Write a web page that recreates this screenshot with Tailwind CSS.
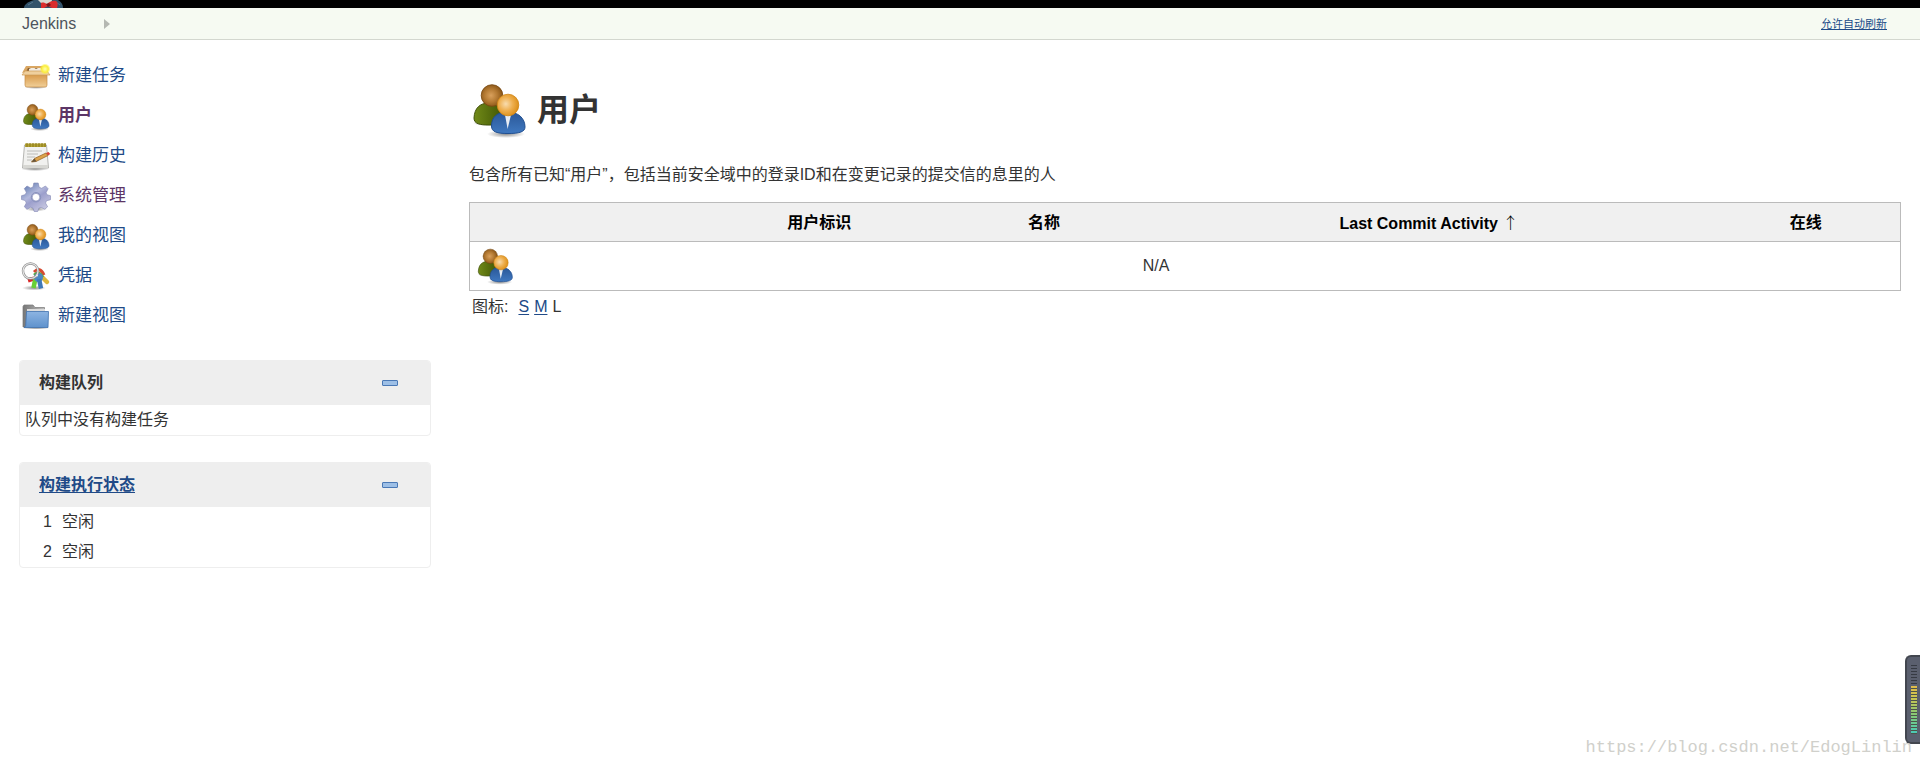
<!DOCTYPE html>
<html lang="zh-CN">
<head>
<meta charset="utf-8">
<meta name="viewport" content="width=device-width, initial-scale=1">
<title>用户 [Jenkins]</title>
<script src="https://cdn.jsdelivr.net/npm/@tailwindcss/browser@4"></script>
</head>
<body class="relative flex min-h-screen flex-col overflow-x-hidden bg-white font-['Liberation_Sans','Noto_Sans_CJK_SC',sans-serif] text-base leading-5 text-[#333]">

<!-- shared icon shapes -->
<svg class="absolute size-0" aria-hidden="true">
  <defs>
    <radialGradient id="gBrown" cx=".45" cy=".5" r=".6"><stop offset="0" stop-color="#d9a05c"/><stop offset=".5" stop-color="#b47a33"/><stop offset="1" stop-color="#7f4c10"/></radialGradient>
    <radialGradient id="gOrange" cx=".4" cy=".45" r=".65"><stop offset="0" stop-color="#f8dcae"/><stop offset=".5" stop-color="#eeae4d"/><stop offset="1" stop-color="#d98a10"/></radialGradient>
    <linearGradient id="gGreen" x2="1"><stop offset="0" stop-color="#718a18"/><stop offset="1" stop-color="#3f5404"/></linearGradient>
    <linearGradient id="gBlue" x2="0" y2="1"><stop offset="0" stop-color="#2a5797"/><stop offset="1" stop-color="#3f78c0"/></linearGradient>
    <radialGradient id="gShade"><stop offset="0" stop-color="#000" stop-opacity=".45"/><stop offset="1" stop-color="#000" stop-opacity="0"/></radialGradient>
    <linearGradient id="gBox" x2="0" y2="1"><stop offset="0" stop-color="#c98d3c"/><stop offset=".3" stop-color="#dca256"/><stop offset="1" stop-color="#f1cf98"/></linearGradient>
    <radialGradient id="gStar"><stop offset="0" stop-color="#fffdb0"/><stop offset=".6" stop-color="#fbee3a"/><stop offset="1" stop-color="#fbee3a" stop-opacity="0"/></radialGradient>
    <linearGradient id="gGear" x2=".7" y2="1"><stop offset="0" stop-color="#4f70a8"/><stop offset=".45" stop-color="#b3b9dc"/><stop offset=".6" stop-color="#9c9fcc"/><stop offset="1" stop-color="#c9c9e2"/></linearGradient>
    <linearGradient id="gFolder" x2="0" y2="1"><stop offset="0" stop-color="#8db4e2"/><stop offset="1" stop-color="#5f92cc"/></linearGradient>
    <linearGradient id="gBack" x2="1"><stop offset="0" stop-color="#777"/><stop offset="1" stop-color="#bbb"/></linearGradient>
    <symbol id="users" viewBox="0 0 60 60">
      <ellipse cx="37" cy="54" rx="19" ry="4" fill="url(#gShade)"/>
      <ellipse cx="18" cy="43" rx="14" ry="3" fill="url(#gShade)"/>
      <path d="M5 38C5.500 28 11 23 20 23s15 6 15 14-6 8-15 8-15-1-15-7Z" fill="url(#gGreen)" stroke="#40510a"/>
      <circle cx="23" cy="15.500" r="10.800" fill="url(#gBrown)" stroke="#76460f" stroke-width=".8"/>
      <path d="M22.500 46c0-9 5.500-14 16-14S56 38 56 47c0 5-6 6.500-17 6.500S22.500 52 22.500 46Z" fill="url(#gBlue)" stroke="#204f91"/>
      <path d="M36 35h6l-3.400 14Z" fill="#e8edf4"/>
      <circle cx="39" cy="25" r="10.800" fill="url(#gOrange)" stroke="#d08616" stroke-width=".8"/>
    </symbol>
  </defs>
</svg>

<header class="relative h-2 w-full overflow-hidden bg-black">
  <svg class="ml-6 block h-2 w-10" viewBox="0 0 40 8" role="img" aria-label="Jenkins">
    <path d="M0 8C0 5 3 2 10 0h24c3 2 5 4 5 8Z" fill="#33536a"/>
    <path d="M4 5l5-3M32 2l4 3" stroke="#56788f" stroke-width="1"/>
    <path d="M14 0h14l-1 4h-9Z" fill="#d8d8d0"/>
    <path d="M17 3c2-1 4 0 6 1 2-2 6-4 9-3 2 1 2 4 1 7h-5l-4-2-4 2h-3Z" fill="#da2c2c"/>
    <path d="M22 4l3-1 2 2-3 2Z" fill="#7c1518"/>
  </svg>
</header>

<nav aria-label="Breadcrumb" class="flex h-8 w-full items-center justify-between border-b border-[#d3d7cf] bg-[#f6faf2] pt-px pr-[33px] pl-[22px]">
  <div class="flex items-center gap-7">
    <a href="#" class="text-[#4d545d]">Jenkins</a>
    <svg class="h-2.5 w-1.5" viewBox="0 0 6 10" aria-hidden="true"><path d="M0 0l6 5-6 5Z" fill="#b5b8b2"/></svg>
  </div>
  <a href="#" class="text-[11px] text-[#204a87] underline">允许自动刷新</a>
</nav>

<div class="flex items-start px-[19px] pt-4">
  <aside class="w-[412px] shrink-0">
    <nav aria-label="任务" class="flex flex-col text-[17px] text-[#204a87]">
      <a href="#" class="flex h-10 items-center gap-[7px] pl-0.5">
        <svg class="mt-0.5 size-[30px]" viewBox="0 0 30 30" aria-hidden="true">
          <ellipse cx="15" cy="25" rx="12" ry="2" fill="url(#gShade)"/>
          <path d="M6 4h18l2 6H4Z" fill="#8a6234"/>
          <path d="M8 7l4-2 3 2 4-2 3 4H8Z" fill="#f2ebe0"/>
          <path d="M5 4h19l-1 2H7l-2 4-4 1Z" fill="#d9a662"/>
          <path d="M4 10h22v13q0 2-2 2H6q-2 0-2-2Z" fill="url(#gBox)" stroke="#c58d45" stroke-width=".7"/>
          <path d="M4 9h22l3 4H1Z" fill="#efcf9d" stroke="#cf9c58" stroke-width=".7"/>
          <circle cx="24" cy="7" r="5.500" fill="url(#gStar)"/>
        </svg>新建任务</a>
      <a href="#" class="flex h-10 items-center gap-[7px] pl-0.5 font-bold text-[#5c3566]" aria-current="page">
        <svg class="mt-0.5 size-[30px]" aria-hidden="true"><use href="#users"/></svg>用户</a>
      <a href="#" class="flex h-10 items-center gap-[7px] pl-0.5">
        <svg class="mt-0.5 size-[30px]" viewBox="0 0 30 30" aria-hidden="true">
          <ellipse cx="14" cy="27" rx="14" ry="2" fill="url(#gShade)"/>
          <path d="M3.500 3h22l2 23h-26Z" fill="#f1f1ef" stroke="#a5a5a1" stroke-width=".8"/>
          <path d="M2 23h25v3H2Z" fill="#d7d7d3"/>
          <path d="M4 1.500h21v3.500H4Z" fill="#b3a336"/>
          <path d="M6 1v4M9 1v4M12 1v4M15 1v4M18 1v4M21 1v4M24 1v4" stroke="#897714" stroke-width="1"/>
          <path d="M6 9h15M6 12h11M6 15h8M6 18h5" stroke="#bcbcb8" stroke-width="1"/>
          <path d="M10.500 20l3-3.500L25 11l2 2.500L15 19.500Z" fill="#dda34a" stroke="#99672a" stroke-width=".8"/>
          <path d="M10.500 20l3-3.500 2 3Z" fill="#65543c"/>
          <path d="M25 11l2.500-1 1.800 2-2.300 1.500Z" fill="#db4334"/>
        </svg>构建历史</a>
      <a href="#" class="flex h-10 items-center gap-[7px] pl-0.5 text-[#5c3566]">
        <svg class="mt-0.5 size-[30px]" viewBox="0 0 30 30" aria-hidden="true">
          <ellipse cx="15" cy="27" rx="11" ry="2.500" fill="url(#gShade)"/>
          <path fill-rule="evenodd" d="M12.800 1h4.400l1 4.300 2.500 1L24.500 4l2.600 2.700-2 4 .8 2 3.600 1v4l-4 1-1 2.300 2.100 3.700-2.800 2.600-3.700-2-2.300 1-1.100 3.200h-3.500l-1.200-3.300-2.400-1-3.600 2.100-2.700-2.600 2-3.700-1-2.400L.5 17.500v-3.800l3.800-1.100 1-2.300-2-3.700L6 4l3.700 2 2.300-1ZM15 11.400a3.800 3.800 0 1 0 0 7.600 3.800 3.800 0 0 0 0-7.600Z" fill="url(#gGear)" stroke="#8287b4" stroke-width=".6"/>
          <circle cx="15" cy="15.200" r="4.700" fill="none" stroke="#8992bd" stroke-width="1"/>
        </svg>系统管理</a>
      <a href="#" class="flex h-10 items-center gap-[7px] pl-0.5">
        <svg class="mt-0.5 size-[30px]" aria-hidden="true"><use href="#users"/></svg>我的视图</a>
      <a href="#" class="flex h-10 items-center gap-[7px] pl-0.5">
        <svg class="mt-0.5 size-[30px]" viewBox="0 0 30 30" aria-hidden="true">
          <ellipse cx="13" cy="26" rx="12" ry="2.500" fill="url(#gShade)"/>
          <path d="M7 18.500l6-2" stroke="#d92828" stroke-width="4"/>
          <path d="M18 12l8 8" stroke="#ddb83f" stroke-width="4.500" stroke-linecap="round"/>
          <path d="M13 10q6-6 10 3" fill="none" stroke="#d64a32" stroke-width="3"/>
          <path d="M14.500 16l-2 10" stroke="#69cf35" stroke-width="4.500"/>
          <path d="M13 13q5-5 9 2" fill="none" stroke="#57a643" stroke-width="2.500"/>
          <circle cx="17.500" cy="15.500" r="4.500" fill="#4d87c5"/>
          <path d="M18 17l2 9.500" stroke="#3f78b8" stroke-width="4.500"/>
          <circle cx="9.500" cy="9" r="7.500" fill="none" stroke="#8f8f8f" stroke-width="2.400"/>
          <circle cx="9.500" cy="9" r="7.500" fill="none" stroke="#e6e6e6" stroke-width="1.200"/>
          <circle cx="16" cy="13.500" r="1" fill="#e9eff5"/>
        </svg>凭据</a>
      <a href="#" class="flex h-10 items-center gap-[7px] pl-0.5">
        <svg class="mt-0.5 size-[30px]" viewBox="0 0 30 30" aria-hidden="true">
          <ellipse cx="15" cy="26" rx="14" ry="1.500" fill="url(#gShade)"/>
          <path d="M2 25V4.500L3 3h9l2 2.500h9.500V25Z" fill="url(#gBack)" stroke="#777" stroke-width=".7"/>
          <path d="M6 7h18v3H6Z" fill="#dcdcdc"/>
          <path d="M5.500 9.500h22L27 25.500H3q1.500-.5 1.700-2Z" fill="url(#gFolder)" stroke="#3f71ae" stroke-width=".8"/>
        </svg>新建视图</a>
    </nav>

    <section class="mt-6 overflow-hidden rounded border border-[#eee]">
      <div class="flex h-11 items-center justify-between bg-[#eee] pr-8 pl-[19px]">
        <h2 class="font-bold">构建队列</h2>
        <button type="button" aria-label="收起构建队列" class="flex h-5 w-4 items-center"><span class="block h-1.5 w-4 rounded-[1px] border border-[#4a78b5] bg-[#9dbfe6]"></span></button>
      </div>
      <p class="px-[5px] py-[5px]">队列中没有构建任务</p>
    </section>

    <section class="mt-[26px] overflow-hidden rounded border border-[#eee]">
      <div class="flex h-11 items-center justify-between bg-[#eee] pr-8 pl-[19px]">
        <h2 class="font-bold"><a href="#" class="text-[#204a87] underline underline-offset-2">构建执行状态</a></h2>
        <button type="button" aria-label="收起构建执行状态" class="flex h-5 w-4 items-center"><span class="block h-1.5 w-4 rounded-[1px] border border-[#4a78b5] bg-[#9dbfe6]"></span></button>
      </div>
      <table class="w-full">
        <tbody>
          <tr class="h-[30px]"><td class="w-8 text-right">1</td><td class="pl-2.5">空闲</td></tr>
          <tr class="h-[30px]"><td class="w-8 text-right">2</td><td class="pl-2.5">空闲</td></tr>
        </tbody>
      </table>
    </section>
  </aside>

  <main class="min-w-0 flex-1 pt-6 pl-[38px]">
    <div class="flex items-center gap-2">
      <svg class="size-[60px]" aria-hidden="true"><use href="#users"/></svg>
      <h1 class="text-[32px] leading-10 font-bold">用户</h1>
    </div>
    <p class="mt-[25px]">包含所有已知“用户”，包括当前安全域中的登录ID和在变更记录的提交信的息里的人</p>

    <table class="mt-[17px] w-full table-fixed border border-[#bbb]">
      <colgroup><col class="w-[15.3%]"><col class="w-[18.9%]"><col class="w-[12.5%]"><col class="w-[40.7%]"><col></colgroup>
      <thead>
        <tr class="h-[39px] border-b border-[#bbb] bg-[#f0f0f0] text-black">
          <th scope="col" aria-label="图标"></th>
          <th scope="col" class="pt-0.5"><a href="#">用户标识&nbsp;&nbsp;</a></th>
          <th scope="col" class="pt-0.5"><a href="#">名称&nbsp;&nbsp;</a></th>
          <th scope="col" class="pt-0.5"><a href="#">Last Commit Activity&nbsp;<span class="font-['Noto_Sans_CJK_SC',sans-serif] font-light">↑</span></a></th>
          <th scope="col" class="pt-0.5"><a href="#">在线&nbsp;&nbsp;</a></th>
        </tr>
      </thead>
      <tbody>
        <tr class="h-[49px]">
          <td class="pl-[5px]"><a href="#" aria-label="用户"><svg class="size-10" aria-hidden="true"><use href="#users"/></svg></a></td>
          <td></td>
          <td></td>
          <td class="pl-[5px]">N/A</td>
          <td></td>
        </tr>
      </tbody>
    </table>

    <div class="mt-1.5 flex gap-[5px] pl-[3px]">
      <span class="mr-[5px]">图标:</span>
      <a href="#" class="text-[#204a87] underline underline-offset-2">S</a>
      <a href="#" class="text-[#204a87] underline underline-offset-2">M</a>
      <span>L</span>
    </div>
  </main>
</div>

<!-- floating level meter -->
<div class="absolute right-0 bottom-[22px] h-[89px] w-[15px] rounded-l-md border-2 border-r-0 border-[#42464f] bg-[#5a5f6e] pt-2 pl-1" aria-hidden="true">
  <svg class="block h-[69px] w-1.5" viewBox="0 0 6 69">
    <defs>
      <linearGradient id="gMeter" gradientUnits="userSpaceOnUse" x1="0" y1="21" x2="0" y2="69"><stop offset="0" stop-color="#e0bb4a"/><stop offset=".25" stop-color="#c9c551"/><stop offset=".6" stop-color="#86c976"/><stop offset="1" stop-color="#46c9ba"/></linearGradient>
    </defs>
    <path d="M3 0V21" stroke="#363a43" stroke-width="6" stroke-dasharray="1 2"/>
    <path d="M3 21V69" stroke="#4c5448" stroke-width="6"/>
    <path d="M0 21h6v2H0zM0 24h6v2H0zM0 27h6v2H0zM0 30h6v2H0zM0 33h6v2H0zM0 36h6v2H0zM0 39h6v2H0zM0 42h6v2H0zM0 45h6v2H0zM0 48h6v2H0zM0 51h6v2H0zM0 54h6v2H0zM0 57h6v2H0zM0 60h6v2H0zM0 63h6v2H0zM0 66h6v2H0z" fill="url(#gMeter)"/>
  </svg>
</div>
<p class="absolute right-2 bottom-2 font-['Liberation_Mono',monospace] text-[17px] text-[#d0d0cb]">https://blog.csdn.net/EdogLinlin</p>
</body>
</html>
